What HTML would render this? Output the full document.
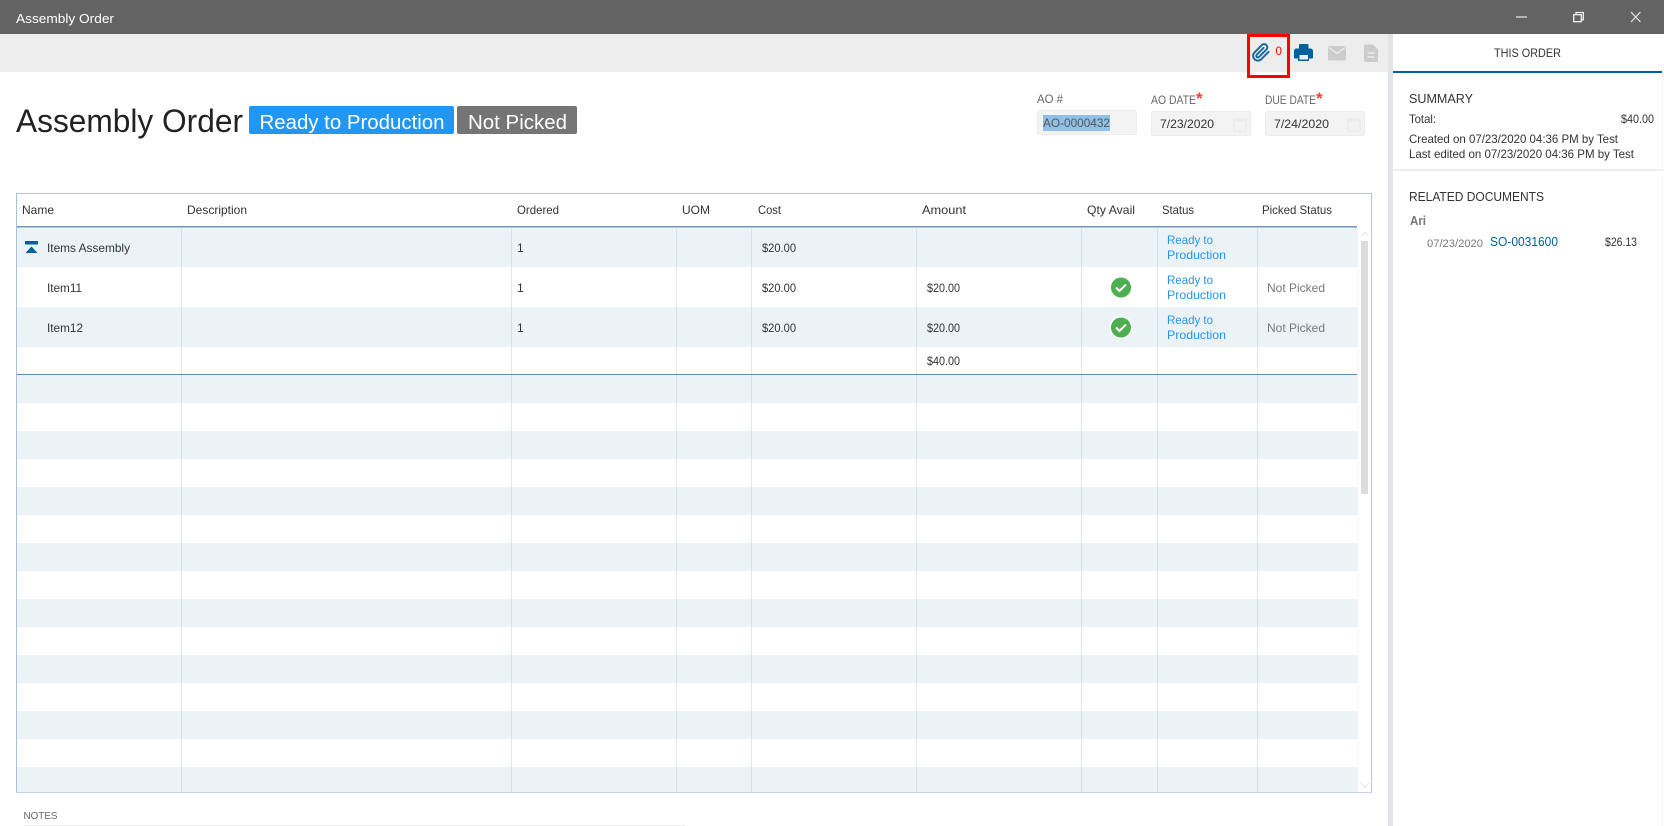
<!DOCTYPE html>
<html lang="en">
<head>
<meta charset="utf-8">
<title>Assembly Order</title>
<style>
html,body{margin:0;padding:0;background:#fff;width:1664px;height:826px;overflow:hidden}
svg{display:block}
text{font-family:"Liberation Sans",sans-serif;fill:#333;font-size:12px}
.h{fill:#333}
.l{fill:#2196f3}
.g{fill:#777}
.w{fill:#fff}
.s{font-size:13px;fill:#333}
.lb{font-size:11.5px;fill:#666}
.a{font-size:17px;fill:#f44336;font-weight:bold}
</style>
</head>
<body>
<svg xmlns="http://www.w3.org/2000/svg" width="1664" height="826" viewBox="0 0 1664 826" shape-rendering="crispEdges">
<rect width="1664" height="826" fill="#fff"/>
<!-- title bar -->
<rect width="1664" height="34" fill="#636363"/>
<text class="w" x="16" y="23" style="font-size:13px" textLength="98" lengthAdjust="spacingAndGlyphs">Assembly Order</text>
<rect x="1516" y="16" width="11" height="2" fill="#b5b5b5"/>
<g fill="none" stroke="#f0f0f0" stroke-width="1.300" shape-rendering="geometricPrecision">
<rect x="1573.700" y="14.700" width="7.600" height="7"/>
<path d="M1576 14v-1.500h7.300v7.300h-1.800"/>
</g>
<path d="M1631 12L1640.500 22M1640.500 12L1631 22" stroke="#e6e6e6" stroke-width="1.200" fill="none" shape-rendering="geometricPrecision"/>
<!-- toolbar -->
<rect x="0" y="34" width="1388" height="38" fill="#ededed"/>
<rect x="1388" y="34" width="5" height="792" fill="#e0e5e9"/>
<rect x="1248.500" y="35.500" width="40" height="41" fill="none" stroke="#f00" stroke-width="3.400"/>
<g shape-rendering="geometricPrecision">
<g transform="translate(1251.500,43) scale(.8)">
<path d="M21.440 11.050l-9.190 9.190a6 6 0 0 1-8.490-8.490l9.190-9.190a4 4 0 0 1 5.660 5.660l-9.200 9.190a2 2 0 0 1-2.830-2.830l8.490-8.480" fill="none" stroke="#1668a3" stroke-width="2.400" stroke-linecap="round" stroke-linejoin="round"/>
</g>
<text x="1275.500" y="55" style="font-size:11.500px;fill:#f00">0</text>
<!-- print -->
<rect x="1299" y="44" width="9.500" height="5" rx="1" fill="#00619b"/>
<path d="M1296.500 48.500h14a2.500 2.500 0 0 1 2.500 2.500v6.500a1 1 0 0 1-1 1h-3v2.500h-11v-2.500h-3a1 1 0 0 1-1-1v-6.500a2.500 2.500 0 0 1 2.500-2.500z" fill="#00619b"/>
<rect x="1299.500" y="55" width="8.500" height="4.500" fill="#ededed"/>
<!-- mail -->
<rect x="1328" y="46" width="18" height="14.500" rx="1.500" fill="#ccc"/>
<path d="M1329 47.500l8 6l8-6" fill="none" stroke="#ededed" stroke-width="1.300"/>
<!-- doc -->
<path d="M1365.500 44.500h7.500l5 5v11a1.500 1.500 0 0 1-1.500 1.500h-11a1.500 1.500 0 0 1-1.500-1.500v-14.500a1.500 1.500 0 0 1 1.500-1.500z" fill="#ccc"/>
<path d="M1367.500 53h7M1367.500 57h7" stroke="#ededed" stroke-width="1.500" fill="none"/>
</g>
<!-- heading -->
<text x="16" y="132" style="font-size:32px;fill:#222" textLength="227" lengthAdjust="spacingAndGlyphs">Assembly Order</text>
<rect x="249" y="106" width="205" height="28" rx="2" fill="#2196f3" shape-rendering="geometricPrecision"/>
<text class="w" x="259.500" y="129" style="font-size:20px" textLength="185" lengthAdjust="spacingAndGlyphs">Ready to Production</text>
<rect x="457" y="106" width="120" height="28" rx="2" fill="#757575" shape-rendering="geometricPrecision"/>
<text class="w" x="468" y="129" style="font-size:20px" textLength="99" lengthAdjust="spacingAndGlyphs">Not Picked</text>
<!-- fields -->
<text class="lb" x="1037" y="103" textLength="26" lengthAdjust="spacingAndGlyphs">AO #</text>
<text class="lb" x="1151" y="104" textLength="45" lengthAdjust="spacingAndGlyphs">AO DATE</text>
<text class="a" x="1196" y="104">*</text>
<text class="lb" x="1265" y="104" textLength="51" lengthAdjust="spacingAndGlyphs">DUE DATE</text>
<text class="a" x="1316" y="104">*</text>
<rect x="1037.500" y="110.500" width="99" height="24" rx="2" fill="#f3f3f3" stroke="#ececec"/>
<rect x="1043" y="115" width="67" height="16" fill="#90c0e8"/>
<text x="1043" y="127" style="font-size:12px;fill:#555" textLength="67" lengthAdjust="spacingAndGlyphs">AO-0000432</text>
<rect x="1151.500" y="111.500" width="99" height="24" rx="2" fill="#f3f3f3" stroke="#ececec"/>
<text x="1160" y="128" textLength="54" lengthAdjust="spacingAndGlyphs">7/23/2020</text>
<rect x="1265.500" y="111.500" width="99" height="24" rx="2" fill="#f3f3f3" stroke="#ececec"/>
<text x="1274" y="128" textLength="55" lengthAdjust="spacingAndGlyphs">7/24/2020</text>
<g fill="#ececec">
<rect x="1233" y="118" width="14" height="14" rx="1"/>
<rect x="1347" y="118" width="14" height="14" rx="1"/>
</g>
<g fill="#f3f3f3">
<rect x="1235" y="122" width="10" height="8"/>
<rect x="1349" y="122" width="10" height="8"/>
</g>
<!-- table stripes -->
<rect x="17" y="228" width="1340" height="39" fill="#ebf3f6"/>
<rect x="17" y="307" width="1340" height="40" fill="#ebf3f6"/>
<rect x="17" y="375" width="1340" height="28" fill="#ebf3f6"/>
<rect x="17" y="431" width="1340" height="28" fill="#ebf3f6"/>
<rect x="17" y="487" width="1340" height="28" fill="#ebf3f6"/>
<rect x="17" y="543" width="1340" height="28" fill="#ebf3f6"/>
<rect x="17" y="599" width="1340" height="28" fill="#ebf3f6"/>
<rect x="17" y="655" width="1340" height="28" fill="#ebf3f6"/>
<rect x="17" y="711" width="1340" height="28" fill="#ebf3f6"/>
<rect x="17" y="767" width="1340" height="25" fill="#ebf3f6"/>
<!-- column lines -->
<g fill="#c4d1da" fill-opacity=".5">
<rect x="181" y="228" width="1" height="564"/>
<rect x="511" y="228" width="1" height="564"/>
<rect x="676" y="228" width="1" height="564"/>
<rect x="751" y="228" width="1" height="564"/>
<rect x="916" y="228" width="1" height="564"/>
<rect x="1081" y="228" width="1" height="564"/>
<rect x="1157" y="228" width="1" height="564"/>
<rect x="1257" y="228" width="1" height="564"/>
</g>
<rect x="1357" y="228" width="1" height="564" fill="#f4f4f4"/>
<!-- rules and border -->
<rect x="17" y="226" width="1340" height="1" fill="#6f95bd"/>
<rect x="17" y="227" width="1340" height="1" fill="#b4c8dc"/>
<rect x="17" y="374" width="1340" height="1" fill="#5f8ab5"/>
<rect x="16" y="193" width="1355" height="1" fill="#b3c5d8"/>
<rect x="16" y="193" width="1" height="599" fill="#a9c0da"/>
<rect x="1371" y="193" width="1" height="599" fill="#b3c5d8"/>
<rect x="16" y="792" width="1356" height="1" fill="#c5d3e6"/>
<!-- scrollbar -->
<rect x="1361" y="241" width="7" height="253" fill="#dcdcdc"/>
<g shape-rendering="geometricPrecision" fill="none" stroke="#e4e4e4" stroke-width="1">
<path d="M1361 236l4-4l4 4"/>
<path d="M1361 783l4 4l4-4"/>
</g>
<!-- headers -->
<text class="h" x="22" y="214" textLength="32" lengthAdjust="spacingAndGlyphs">Name</text>
<text class="h" x="187" y="214" textLength="60" lengthAdjust="spacingAndGlyphs">Description</text>
<text class="h" x="517" y="214" textLength="42" lengthAdjust="spacingAndGlyphs">Ordered</text>
<text class="h" x="682" y="214" textLength="28" lengthAdjust="spacingAndGlyphs">UOM</text>
<text class="h" x="758" y="214" textLength="23" lengthAdjust="spacingAndGlyphs">Cost</text>
<text class="h" x="922" y="214" textLength="44" lengthAdjust="spacingAndGlyphs">Amount</text>
<text class="h" x="1087" y="214" textLength="48" lengthAdjust="spacingAndGlyphs">Qty Avail</text>
<text class="h" x="1162" y="214" textLength="32" lengthAdjust="spacingAndGlyphs">Status</text>
<text class="h" x="1262" y="214" textLength="70" lengthAdjust="spacingAndGlyphs">Picked Status</text>
<!-- row 1 -->
<rect x="25" y="241" width="13" height="3.500" fill="#00619b"/>
<path d="M31.500 246.500L37.500 253H25.500Z" fill="#00619b" shape-rendering="geometricPrecision"/>
<text x="47" y="252" textLength="83" lengthAdjust="spacingAndGlyphs">Items Assembly</text>
<text x="517" y="252">1</text>
<text x="762" y="252" textLength="34" lengthAdjust="spacingAndGlyphs">$20.00</text>
<text class="l" x="1167" y="244" textLength="46" lengthAdjust="spacingAndGlyphs">Ready to</text>
<text class="l" x="1167" y="259" textLength="59" lengthAdjust="spacingAndGlyphs">Production</text>
<!-- row 2 -->
<text x="47" y="292" textLength="35" lengthAdjust="spacingAndGlyphs">Item11</text>
<text x="517" y="292">1</text>
<text x="762" y="292" textLength="34" lengthAdjust="spacingAndGlyphs">$20.00</text>
<text x="927" y="292" textLength="33" lengthAdjust="spacingAndGlyphs">$20.00</text>
<text class="l" x="1167" y="284" textLength="46" lengthAdjust="spacingAndGlyphs">Ready to</text>
<text class="l" x="1167" y="299" textLength="59" lengthAdjust="spacingAndGlyphs">Production</text>
<text class="g" x="1267" y="292" textLength="58" lengthAdjust="spacingAndGlyphs">Not Picked</text>
<g shape-rendering="geometricPrecision">
<circle cx="1121" cy="287.500" r="10" fill="#4caf50"/>
<path d="M1116 287.500l3.500 3.500l6.500-6.500" fill="none" stroke="#fff" stroke-width="2"/>
</g>
<!-- row 3 -->
<text x="47" y="332" textLength="36" lengthAdjust="spacingAndGlyphs">Item12</text>
<text x="517" y="332">1</text>
<text x="762" y="332" textLength="34" lengthAdjust="spacingAndGlyphs">$20.00</text>
<text x="927" y="332" textLength="33" lengthAdjust="spacingAndGlyphs">$20.00</text>
<text class="l" x="1167" y="324" textLength="46" lengthAdjust="spacingAndGlyphs">Ready to</text>
<text class="l" x="1167" y="339" textLength="59" lengthAdjust="spacingAndGlyphs">Production</text>
<text class="g" x="1267" y="332" textLength="58" lengthAdjust="spacingAndGlyphs">Not Picked</text>
<g shape-rendering="geometricPrecision">
<circle cx="1121" cy="327.500" r="11.500" fill="#fff"/>
<circle cx="1121" cy="327.500" r="10" fill="#4caf50"/>
<path d="M1116 327.500l3.500 3.500l6.500-6.500" fill="none" stroke="#fff" stroke-width="2"/>
</g>
<!-- total -->
<text x="927" y="365" textLength="33" lengthAdjust="spacingAndGlyphs">$40.00</text>
<!-- notes -->
<text x="23.500" y="819" style="font-size:10.500px;fill:#666" textLength="34" lengthAdjust="spacingAndGlyphs">NOTES</text>
<rect x="24" y="825" width="661" height="1" fill="#eee"/>
<!-- right panel -->
<text x="1494" y="57" textLength="67" lengthAdjust="spacingAndGlyphs">THIS ORDER</text>
<rect x="1393" y="71" width="269" height="2" fill="#00619b"/>
<text class="s" x="1409" y="103" textLength="64" lengthAdjust="spacingAndGlyphs">SUMMARY</text>
<text x="1409" y="123" textLength="27" lengthAdjust="spacingAndGlyphs">Total:</text>
<text x="1621" y="123" textLength="33" lengthAdjust="spacingAndGlyphs">$40.00</text>
<text x="1409" y="143" textLength="209" lengthAdjust="spacingAndGlyphs">Created on 07/23/2020 04:36 PM by Test</text>
<text x="1409" y="158" textLength="225" lengthAdjust="spacingAndGlyphs">Last edited on 07/23/2020 04:36 PM by Test</text>
<rect x="1393" y="169" width="271" height="2" fill="#eee"/>
<text class="s" x="1409" y="201" textLength="135" lengthAdjust="spacingAndGlyphs">RELATED DOCUMENTS</text>
<text x="1410" y="225" style="font-size:13px;font-weight:bold;fill:#777" textLength="16" lengthAdjust="spacingAndGlyphs">Ari</text>
<text x="1427" y="247" style="font-size:11px;fill:#777" textLength="56" lengthAdjust="spacingAndGlyphs">07/23/2020</text>
<text x="1490" y="246" style="font-size:12.500px;fill:#00619b" textLength="68" lengthAdjust="spacingAndGlyphs">SO-0031600</text>
<text x="1605" y="246" textLength="32" lengthAdjust="spacingAndGlyphs">$26.13</text>
<rect x="1662" y="73" width="1" height="753" fill="#f6f6f6"/>
</svg>
</body>
</html>
